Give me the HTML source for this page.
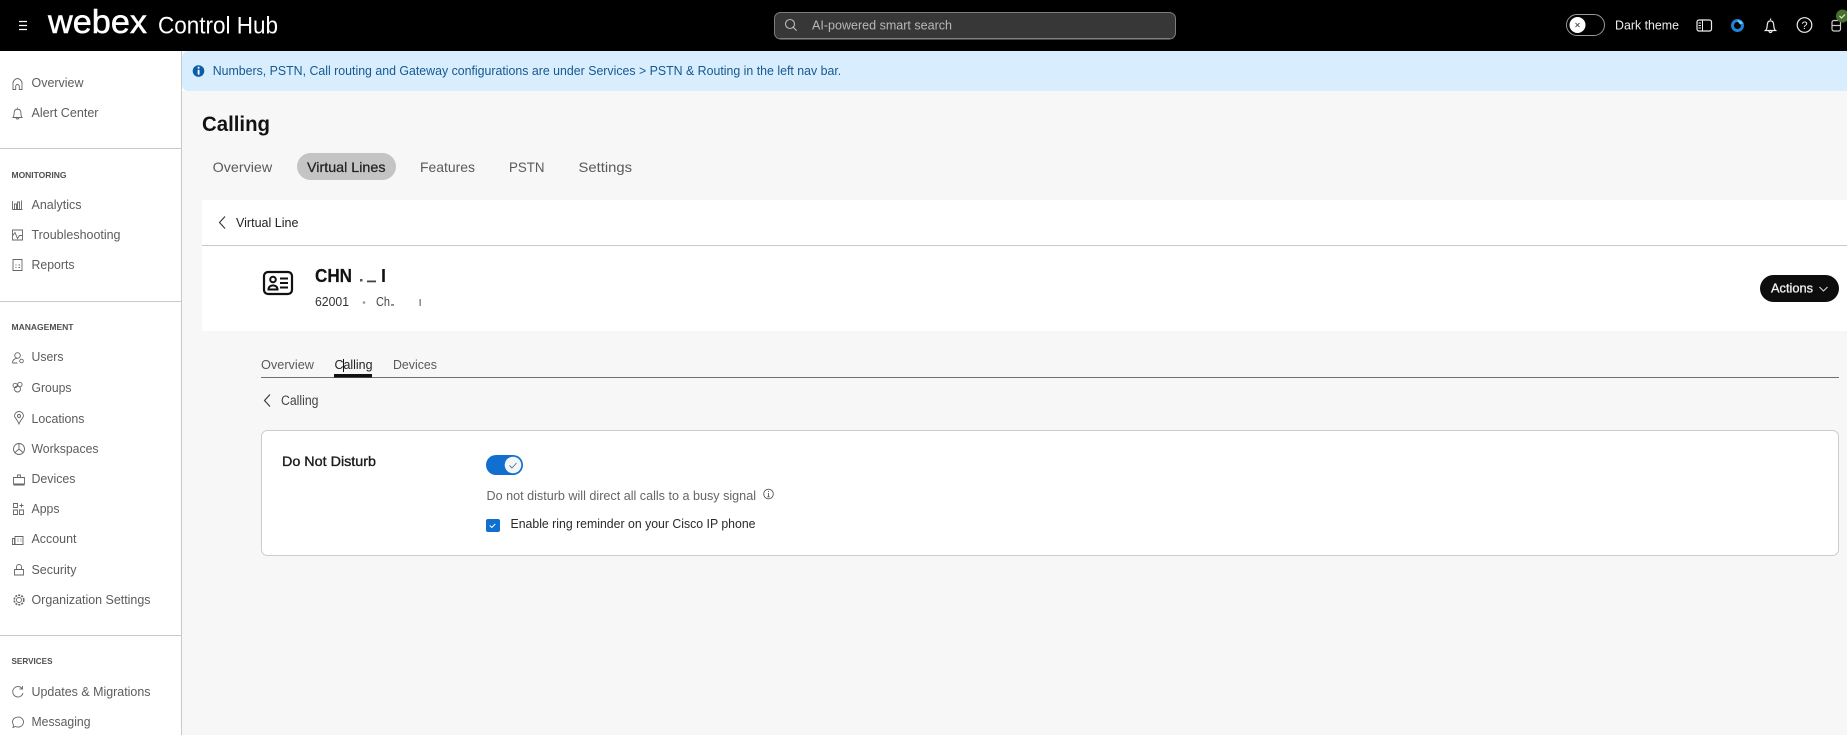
<!DOCTYPE html>
<html><head><meta charset="utf-8"><title>Control Hub</title>
<style>
html,body{margin:0;padding:0;background:#f7f7f7;overflow:hidden}
svg{display:block;font-family:"Liberation Sans",sans-serif}
.n{font-size:13px;fill:#5c5c5c}
.i{fill:none;stroke:#666;stroke-width:.9}
.h{font-size:8.5px;font-weight:700;fill:#4f4f4f}
.t{font-size:14px;fill:#5a5a5a}
</style></head><body>
<svg width="1847" height="735" viewBox="0 0 1847 735" xmlns="http://www.w3.org/2000/svg">
<rect width="1847" height="735" fill="#f7f7f7"/>
<!-- sidebar -->
<rect x="0" y="51" width="181" height="684" fill="#fff"/>
<rect x="181" y="51" width="1" height="684" fill="#c9c9c9"/>
<rect x="0" y="148" width="181" height="1" fill="#c9c9c9"/>
<rect x="0" y="301" width="181" height="1" fill="#c9c9c9"/>
<rect x="0" y="635" width="181" height="1" fill="#c9c9c9"/>
<!-- header -->
<rect width="1847" height="51" fill="#000"/>
<path d="M19 21.500h8M19 25.500h8M19 29.500h8" stroke="#fff" stroke-width="1.200"/>
<text x="48" y="33" font-size="33" fill="#fff" stroke="#fff" stroke-width=".5" textLength="99" lengthAdjust="spacingAndGlyphs">webex</text>
<text x="158" y="33.500" font-size="24" fill="#fff" textLength="120" lengthAdjust="spacingAndGlyphs">Control Hub</text>
<rect x="774.500" y="12.500" width="401" height="26.500" rx="6" fill="#373737" stroke="#7c7c7c"/>
<path d="M780 38.800h390" stroke="#8a8a8a" stroke-width="1.300"/>
<circle cx="790" cy="24" r="4.500" fill="none" stroke="#bbb" stroke-width="1.100"/><path d="M793.300 27.300l3.300 3.300" stroke="#bbb" stroke-width="1.100"/>
<text x="812" y="29.500" font-size="13" fill="#b8b8b8" textLength="140" lengthAdjust="spacingAndGlyphs">AI-powered smart search</text>
<rect x="1566.500" y="14.500" width="38" height="21" rx="10.500" fill="#000" stroke="#999"/>
<circle cx="1577.500" cy="25" r="8" fill="#fff"/><path d="M1575.500 23l4 4M1579.500 23l-4 4" stroke="#555" stroke-width="1"/>
<text x="1615" y="29.500" font-size="13" fill="#eee" textLength="64" lengthAdjust="spacingAndGlyphs">Dark theme</text>
<rect x="1697" y="20" width="14.500" height="11" rx="2" fill="none" stroke="#eee" stroke-width="1.200"/>
<path d="M1702.500 20v11M1698.500 23h2.500M1698.500 25.500h2.500M1698.500 28h2.500" stroke="#eee" stroke-width="1"/>
<circle cx="1737.500" cy="25.500" r="5" fill="none" stroke="#1f83d6" stroke-width="3"/><path d="M1737 20.500a5 5 0 0 1 6 3l-3 1z" fill="#6fc6e8"/>
<path d="M1765.500 30.500c2-1.500 1.500-5 2-7 .6-3.500 5.400-3.500 6 0 .5 2 0 5.500 2 7zM1769 31a1.500 1.500 0 0 0 3 0M1770.500 18.500v1.500" fill="none" stroke="#eee" stroke-width="1.200"/>
<circle cx="1804.500" cy="25" r="7.300" fill="none" stroke="#eee" stroke-width="1.200"/>
<text x="1804.500" y="29" font-size="11" fill="#eee" text-anchor="middle">?</text>
<rect x="1832" y="20.500" width="8.500" height="10.500" rx="2" fill="none" stroke="#ccc" stroke-width="1.200"/><path d="M1832 25.500h8.500" stroke="#ccc" stroke-width="1.200"/>
<circle cx="1842.500" cy="16" r="6.500" fill="#47702d"/><path d="M1839.500 16l2 2 3.500-3.500" fill="none" stroke="#e8f0e0" stroke-width="1.100"/>
<!-- sidebar items -->
<g class="i">
<path transform="translate(17.500 84)" d="M-4.500 5.500v-6.500C-4.500-3-2-5.500 0-5.500S4.500-3 4.500-1V5.500H1.800V2.300a1.800 1.800 0 0 0-3.600 0V5.500z"/>
<path transform="translate(17.500 114)" d="M-4.500 3.500c1.300-1.500 1-4.500 1.300-6 .6-3 5.800-3 6.400 0 .3 1.500 0 4.500 1.300 6zM-1.500 3.500a1.500 1.500 0 0 0 3 0M0-5.500v-1"/>
<path transform="translate(17.500 205)" d="M-5-4v8.500M-5 4.500H5M-3-1h2v5.500h-2zM0-3h2v7.500h-2zM4-4.500v8.500"/>
<path transform="translate(17.500 235)" d="M-5-5h10v10H-5zM-5 1l2.500-3.500 2.500 6 2-3h3"/>
<path transform="translate(17.500 265)" d="M-4.500-5.500h9v11h-9zM-2 0h1M1 0h1.500M-2 2.500h1M1 2.500h1.500"/>
<path transform="translate(17.500 358)" d="M-2.800-2.500a2.800 2.800 0 1 0 5.600 0a2.800 2.800 0 1 0-5.600 0M-5 5c0-3 2-4.500 4-4.500M-5 5h5"/><circle cx="21.500" cy="361" r="1.800"/>
<path transform="translate(17.500 388)" d="M-4.500-2.500a2.200 2.200 0 1 0 4.400 0a2.200 2.200 0 1 0-4.400 0M.2-3.500a2.200 2.200 0 1 0 4.400 0a2.200 2.200 0 1 0-4.400 0M-3 1a3 3 0 1 0 6 0a3 3 0 1 0-6 0"/>
<path transform="translate(19 418)" d="M0 6C-2 1-4.500-.5-4.500-2a4.500 4.500 0 0 1 9 0C4.500-.5 2 1 0 6z"/><circle cx="19" cy="416" r="1.500"/>
<circle cx="19" cy="449" r="5.500"/><path d="M19 443.500v5.500l-4 3.500M19 449l4 3.500"/>
<path transform="translate(19 480)" d="M-5.500-2.500h11v6.500h-11zM-5.500 5h11M-1.500-2.500v-2.500h3v2.500"/>
<path transform="translate(18 509)" d="M-4.500-5.500h4v4h-4zM-4.500 1h4v4.500h-4zM1.500 1h4v4.500h-4zM3.500-5.500v4M1.500-3.500h4"/>
<path transform="translate(17.500 540)" d="M-5.500 4.500H6M-5-1.500h2V4.500h-2zM-2.500-3.500h8V4.500h-8zM0-1h1M3-1h1M0 1h1M3 1h1"/>
<path transform="translate(19 570)" d="M-4.500-.5h9V5h-9zM-2.500-.5V-3a2.500 2.500 0 0 1 5 0V-.5"/>
<circle cx="19" cy="600" r="2.500"/><circle cx="19" cy="600" r="4.800" stroke-dasharray="2 1.100" stroke-width="1.600"/>
<path transform="translate(18 692)" d="M4-3.500A5.200 5.200 0 1 0 5 1M4.500-6v3h-3"/>
<path transform="translate(18 722)" d="M-5.500 0a5.500 5 0 1 1 3 4.500L-5 5.500-4.500 3A5 5 0 0 1-5.500 0z"/>
</g>
<text class="n" x="31.500" y="87" textLength="52" lengthAdjust="spacingAndGlyphs">Overview</text>
<text class="n" x="31.500" y="117" textLength="67" lengthAdjust="spacingAndGlyphs">Alert Center</text>
<text class="h" x="11.500" y="178" textLength="55" lengthAdjust="spacingAndGlyphs">MONITORING</text>
<text class="n" x="31.500" y="209" textLength="50" lengthAdjust="spacingAndGlyphs">Analytics</text>
<text class="n" x="31.500" y="239" textLength="89" lengthAdjust="spacingAndGlyphs">Troubleshooting</text>
<text class="n" x="31.500" y="269" textLength="43" lengthAdjust="spacingAndGlyphs">Reports</text>
<text class="h" x="11.500" y="330" textLength="62" lengthAdjust="spacingAndGlyphs">MANAGEMENT</text>
<text class="n" x="31.500" y="361" textLength="32" lengthAdjust="spacingAndGlyphs">Users</text>
<text class="n" x="31.500" y="392" textLength="40" lengthAdjust="spacingAndGlyphs">Groups</text>
<text class="n" x="31.500" y="423" textLength="53" lengthAdjust="spacingAndGlyphs">Locations</text>
<text class="n" x="31.500" y="453" textLength="67" lengthAdjust="spacingAndGlyphs">Workspaces</text>
<text class="n" x="31.500" y="483" textLength="44" lengthAdjust="spacingAndGlyphs">Devices</text>
<text class="n" x="31.500" y="513" textLength="28" lengthAdjust="spacingAndGlyphs">Apps</text>
<text class="n" x="31.500" y="543" textLength="45" lengthAdjust="spacingAndGlyphs">Account</text>
<text class="n" x="31.500" y="574" textLength="45" lengthAdjust="spacingAndGlyphs">Security</text>
<text class="n" x="31.500" y="604" textLength="119" lengthAdjust="spacingAndGlyphs">Organization Settings</text>
<text class="h" x="11.500" y="664" textLength="41" lengthAdjust="spacingAndGlyphs">SERVICES</text>
<text class="n" x="31.500" y="696" textLength="119" lengthAdjust="spacingAndGlyphs">Updates &amp; Migrations</text>
<text class="n" x="31.500" y="726" textLength="59" lengthAdjust="spacingAndGlyphs">Messaging</text>
<!-- banner -->
<path d="M1847 51H182v40h1665z" fill="#d8eeff"/>
<path d="M182 51h6a6 6 0 0 0-6 6zM182 91h6a6 6 0 0 1-6-6z" fill="#fff"/>
<circle cx="198.500" cy="71" r="5.800" fill="#0a5ea8"/><rect x="197.700" y="66.800" width="1.800" height="1.800" fill="#fff"/><rect x="197.700" y="69.800" width="1.800" height="4.800" fill="#fff"/>
<text x="212.700" y="75" font-size="13" fill="#17588f" textLength="628.500" lengthAdjust="spacingAndGlyphs">Numbers, PSTN, Call routing and Gateway configurations are under Services &gt; PSTN &amp; Routing in the left nav bar.</text>
<!-- page title -->
<text x="202" y="131" font-size="21" font-weight="700" fill="#121212" textLength="68" lengthAdjust="spacingAndGlyphs">Calling</text>
<rect x="297" y="153" width="99" height="27" rx="13.500" fill="#c4c4c4"/>
<text class="t" x="212.700" y="172" textLength="59.500" lengthAdjust="spacingAndGlyphs">Overview</text>
<text x="307" y="172" font-size="14" style="fill:#222" stroke="#222" stroke-width=".25" textLength="78.500" lengthAdjust="spacingAndGlyphs">Virtual Lines</text>
<text class="t" x="420" y="172" textLength="55" lengthAdjust="spacingAndGlyphs">Features</text>
<text class="t" x="509" y="172" textLength="35.500" lengthAdjust="spacingAndGlyphs">PSTN</text>
<text class="t" x="578.500" y="172" textLength="53.500" lengthAdjust="spacingAndGlyphs">Settings</text>
<!-- white card -->
<rect x="202" y="200" width="1645" height="131" fill="#fff"/>
<rect x="202" y="245" width="1645" height="1" fill="#c9c9c9"/>
<path d="M225 216.500l-5.500 6 5.500 6" fill="none" stroke="#333" stroke-width="1.100"/>
<text x="236" y="227" font-size="13" fill="#222" textLength="62.500" lengthAdjust="spacingAndGlyphs">Virtual Line</text>
<rect x="264" y="272" width="28" height="22" rx="4" fill="none" stroke="#111" stroke-width="2.200"/>
<circle cx="273" cy="279.500" r="2.800" fill="none" stroke="#111" stroke-width="2"/><path d="M268.500 289.500c0-5.500 9-5.500 9 0z" fill="none" stroke="#111" stroke-width="2"/>
<path d="M280 278.500h8M280 283h8M280 287.500h8" stroke="#111" stroke-width="1.900"/>
<text x="315" y="282" font-size="18" font-weight="700" fill="#111" stroke="#111" stroke-width=".2" textLength="37" lengthAdjust="spacingAndGlyphs">CHN</text>
<text x="381" y="282" font-size="18" font-weight="700" fill="#111">I</text>
<rect x="360" y="279" width="2.500" height="2.500" fill="#555"/><rect x="367" y="280.500" width="9" height="1.800" fill="#444"/>
<text x="315" y="306" font-size="13" fill="#333" textLength="34" lengthAdjust="spacingAndGlyphs">62001</text>
<circle cx="364" cy="302.500" r="1.300" fill="#999"/>
<text x="376" y="306" font-size="13" fill="#444" textLength="14" lengthAdjust="spacingAndGlyphs">Ch</text>
<rect x="391" y="304" width="3" height="1.800" fill="#888"/><rect x="419.500" y="299" width="1.300" height="7" fill="#777"/>
<rect x="1760" y="275" width="79" height="27" rx="13.500" fill="#0d0d0d"/>
<text x="1771" y="292.500" font-size="13" fill="#f0f0f0" stroke="#f0f0f0" stroke-width=".3" textLength="42" lengthAdjust="spacingAndGlyphs">Actions</text>
<path d="M1819.500 287l4 4 4-4" fill="none" stroke="#ddd" stroke-width="1"/>
<!-- inner tabs -->
<text x="261" y="369" font-size="13" fill="#5a5a5a" textLength="53" lengthAdjust="spacingAndGlyphs">Overview</text>
<text x="334.500" y="369" font-size="13" fill="#222" textLength="38" lengthAdjust="spacingAndGlyphs">Calling</text>
<text x="393" y="369" font-size="13" fill="#5a5a5a" textLength="44" lengthAdjust="spacingAndGlyphs">Devices</text>
<rect x="343" y="359" width="1" height="13" fill="#111"/>
<rect x="261" y="377" width="1578" height="1" fill="#707070"/>
<rect x="334" y="374" width="38" height="3.500" fill="#111"/>
<path d="M270 394.500l-5.500 6 5.500 6" fill="none" stroke="#333" stroke-width="1.100"/>
<text x="281" y="405" font-size="13.500" fill="#444" textLength="37.500" lengthAdjust="spacingAndGlyphs">Calling</text>
<!-- settings card -->
<rect x="261.500" y="430.500" width="1577" height="125" rx="6" fill="#fff" stroke="#ccc"/>
<text x="282" y="466" font-size="14" fill="#1c1c1c" stroke="#1c1c1c" stroke-width=".35" textLength="94" lengthAdjust="spacingAndGlyphs">Do Not Disturb</text>
<rect x="486" y="455" width="37" height="20" rx="10" fill="#1170cf"/>
<circle cx="513" cy="465" r="8.300" fill="#f3f7fb"/><path d="M509.500 465.500l2.500 2.500 4.500-5" fill="none" stroke="#57718a" stroke-width=".9"/>
<text x="486.500" y="500" font-size="13" fill="#666" textLength="269.500" lengthAdjust="spacingAndGlyphs">Do not disturb will direct all calls to a busy signal</text>
<circle cx="768.500" cy="494" r="4.800" fill="none" stroke="#555" stroke-width=".9"/><path d="M768.500 493v3.500M768.500 491v1M767.300 496.800h2.400" stroke="#555" stroke-width=".9"/>
<rect x="486" y="519" width="14" height="13" rx="2" fill="#1170cf"/>
<path d="M489.800 525.500l2 2 3.500-3.500" fill="none" stroke="#fff" stroke-width="1"/>
<text x="510.500" y="528" font-size="13" fill="#2a2a2a" textLength="245" lengthAdjust="spacingAndGlyphs">Enable ring reminder on your Cisco IP phone</text>
</svg>
</body></html>
